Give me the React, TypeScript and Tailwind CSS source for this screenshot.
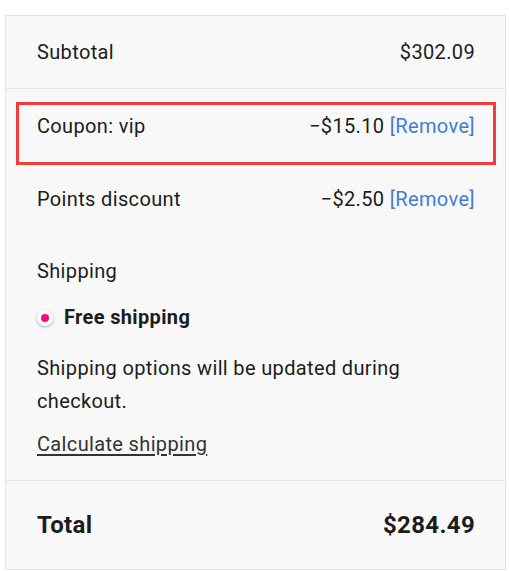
export default function App() {
  return (
    <div className="min-h-screen bg-white pt-[15px] pl-[5px]" style={{ fontFamily: "Roboto, 'Liberation Sans', sans-serif" }}>
      <div className="w-[501px] border border-[#e3e3e3] bg-[#f8f8f8] text-[20px] tracking-[0.35px] text-[#1c1c1c]">
        {/* Subtotal */}
        <div className="flex h-[73px] items-center justify-between border-b border-[#e3e3e3] pl-[31px] pr-[30px]">
          <span>Subtotal</span>
          <span>$302.09</span>
        </div>

        {/* Coupon */}
        <div className="relative flex h-[73px] items-center justify-between pl-[31px] pr-[30px]">
          <span>Coupon: vip</span>
          <span>
            −$15.10 <a className="text-[#3f7ed2]">[Remove]</a>
          </span>
          <div className="pointer-events-none absolute left-[10px] top-[13px] h-[63px] w-[480px] border-[3px] border-[#f23b3b]" />
        </div>

        {/* Points */}
        <div className="flex h-[73px] items-center justify-between pl-[31px] pr-[30px]">
          <span>Points discount</span>
          <span>
            −$2.50 <a className="text-[#3f7ed2]">[Remove]</a>
          </span>
        </div>

        {/* Shipping */}
        <div className="flex flex-col border-b border-[#e3e3e3] pl-[31px] pr-[30px] pt-[23px] pb-[22px]">
          <div className="leading-[27px]">Shipping</div>
          <div className="mt-[19px] flex items-center leading-[27px]">
            <span className="flex h-[16px] w-[16px] items-center justify-center rounded-full bg-white shadow-[0_1px_3px_rgba(0,0,0,0.3)]">
              <span className="h-[8px] w-[8px] rounded-full bg-[#f5078f]" />
            </span>
            <span className="ml-[11px] font-bold">Free shipping</span>
          </div>
          <p className="mt-[21px] leading-[33px]">Shipping options will be updated during checkout.</p>
          <a className="mt-[13px] self-start leading-[27px] text-[#333] underline underline-offset-[3px]">Calculate shipping</a>
        </div>

        {/* Total */}
        <div className="flex h-[88px] items-center justify-between pl-[31px] pr-[30px] text-[24px] font-bold">
          <span>Total</span>
          <span>$284.49</span>
        </div>
      </div>
    </div>
  );
}
